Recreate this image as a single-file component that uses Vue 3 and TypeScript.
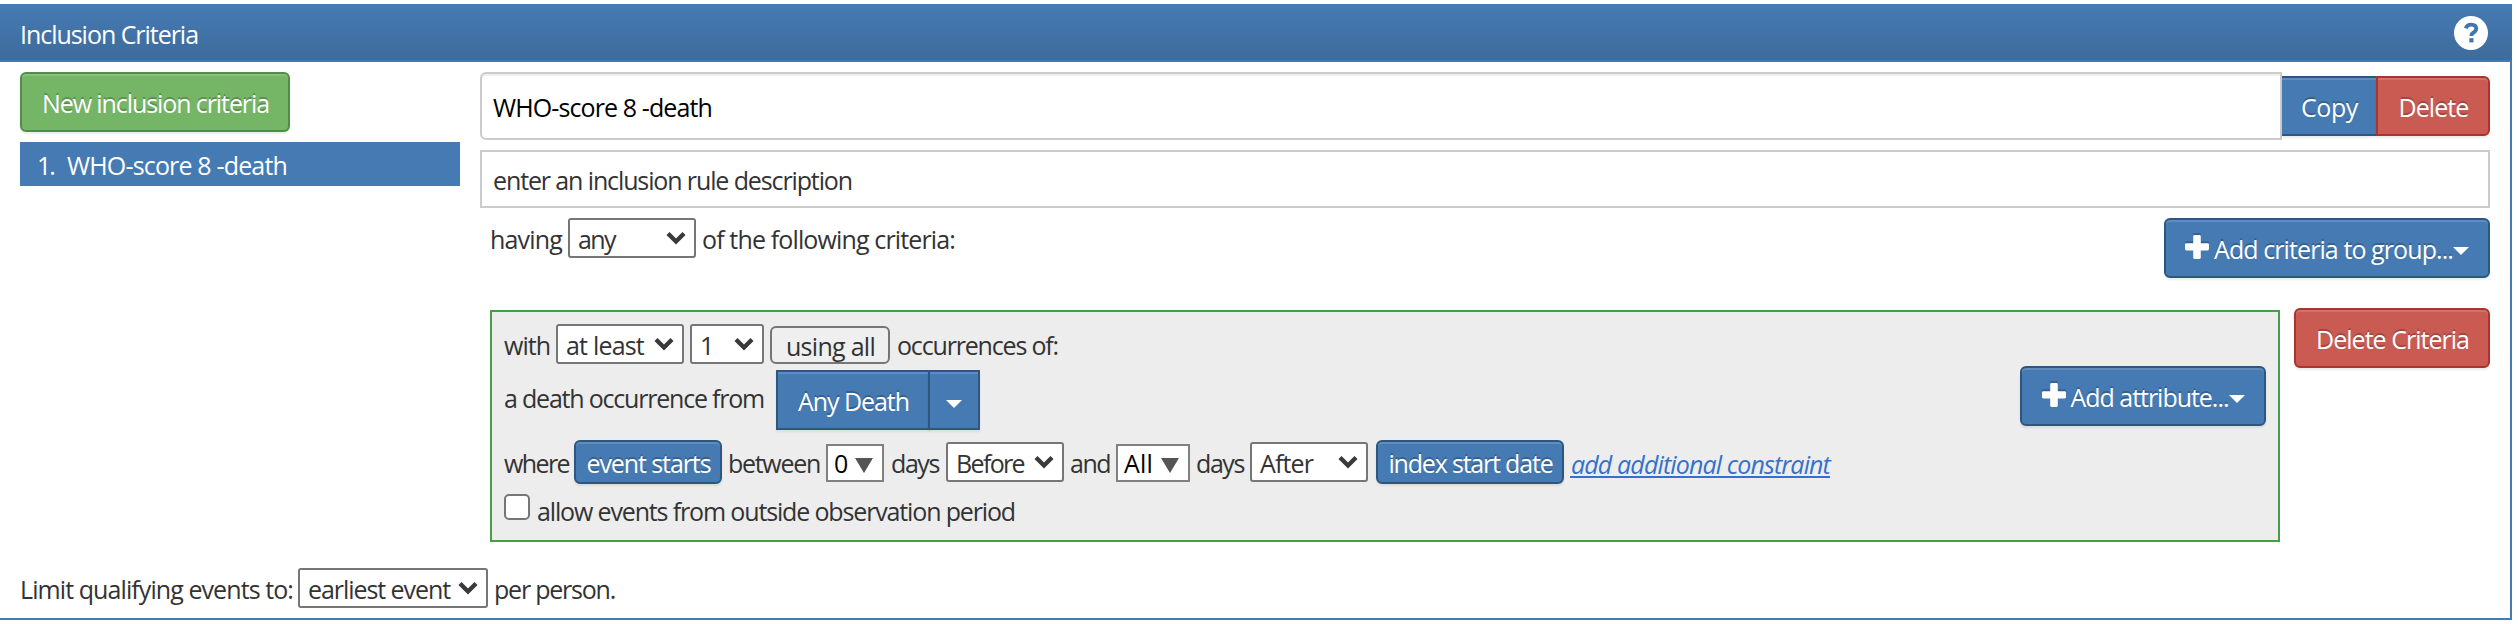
<script setup lang="ts">
import { h, type Directive, type FunctionalComponent } from 'vue'

// Spreads or tightens letters so a label occupies exactly the given width.
const vFit: Directive<HTMLElement, number> = {
  mounted(el, { value }) {
    const natural = el.getBoundingClientRect().width
    const count = (el.textContent ?? '').length
    el.style.letterSpacing = `${(value - natural) / count}px`
    el.style.width = `${value}px`
  },
}

const Chevron: FunctionalComponent = () =>
  h('svg', { width: 20, height: 14, viewBox: '0 0 20 14' }, [
    h('path', { d: 'M2 2.5 10 10.5 18 2.5', fill: 'none', stroke: '#3a3a3a', 'stroke-width': 4.4 }),
  ])
const Plus: FunctionalComponent = () =>
  h('svg', { width: 24, height: 24, viewBox: '0 0 24 24' }, [
    h('path', {
      d: 'M9.6 0h4.8q1.4 0 1.4 1.4v6.8h6.8q1.4 0 1.4 1.4v4.4q0 1.4-1.4 1.4h-6.8v7.2q0 1.4-1.4 1.4H9.6q-1.4 0-1.4-1.4v-7.2H1.4Q0 15.4 0 14V9.6q0-1.4 1.4-1.4h6.8V1.4Q8.2 0 9.6 0z',
      fill: '#fff',
    }),
  ])
const Caret: FunctionalComponent = () =>
  h('svg', { width: 16, height: 8, viewBox: '0 0 16 8' }, [h('path', { d: 'M0 0h16L8 8z', fill: '#fff' })])
const Arrow: FunctionalComponent = () =>
  h('svg', { width: 18, height: 15, viewBox: '0 0 18 15' }, [h('path', { d: 'M0 0h18L9 15z', fill: '#555' })])
</script>

<template>
  <div class="panel">
    <header class="head">
      <span v-fit="179" class="t">Inclusion Criteria</span>
      <svg class="help" width="34" height="34" viewBox="0 0 34 34">
        <circle cx="17" cy="17" r="17" fill="#fff" />
        <path d="M11.8 12.3Q13 8.6 17.2 8.6q5 .1 5 4 0 2.4-2.6 3.9-2.2 1.2-2.2 3.4" fill="none" stroke="#4277ae" stroke-width="3.8" />
        <rect x="15.3" y="22.2" width="4.2" height="4.2" fill="#4277ae" />
      </svg>
    </header>

    <div class="body">
      <aside class="side">
        <button class="btn green new"><span v-fit="228" class="t">New inclusion criteria</span></button>
        <div class="item">
          <span v-fit="18" class="t">1.</span>
          <span v-fit="221" class="t title">WHO-score 8 -death</span>
        </div>
      </aside>

      <main class="main">
        <div class="name-row">
          <div class="input name"><span v-fit="220" class="t">WHO-score 8 -death</span></div>
          <button class="btn blue copy"><span v-fit="58" class="t">Copy</span></button>
          <button class="btn red delete"><span v-fit="71" class="t">Delete</span></button>
        </div>
        <div class="input desc"><span v-fit="360" class="t">enter an inclusion rule description</span></div>

        <div class="having-row">
          <div class="line having">
            <span v-fit="73" class="t">having</span>
            <div class="select s128 g6"><span v-fit="38" class="t">any</span><Chevron /></div>
            <span v-fit="254" class="t g5">of the following criteria:</span>
          </div>
          <button class="btn blue add-criteria">
            <Plus /><span v-fit="240" class="t">Add criteria to group...</span><Caret class="caret" />
          </button>
        </div>

        <div class="group-row">
          <section class="group">
            <div class="line r1">
              <span v-fit="47" class="t">with</span>
              <div class="select s128 g6"><span v-fit="79" class="t">at least</span><Chevron /></div>
              <div class="select s74 g6"><span class="t one">1</span><Chevron /></div>
              <button class="plain g6"><span v-fit="90" class="t">using all</span></button>
              <span v-fit="162" class="t g6">occurrences of:</span>
            </div>

            <div class="r2">
              <span v-fit="261" class="t source">a death occurrence from</span>
              <div class="split">
                <button class="btn blue square any"><span v-fit="112" class="t">Any Death</span></button>
                <button class="btn blue square drop"><Caret /></button>
              </div>
              <button class="btn blue add-attribute">
                <Plus /><span v-fit="159" class="t">Add attribute...</span><Caret class="caret" />
              </button>
            </div>

            <div class="line r3">
              <span v-fit="66" class="t">where</span>
              <button class="btn blue small w148 g5"><span v-fit="125" class="t">event starts</span></button>
              <span v-fit="93" class="t g5">between</span>
              <div class="combo w58 g6"><span class="t">0</span><Arrow /></div>
              <span v-fit="49" class="t g6">days</span>
              <div class="select s118 g7"><span v-fit="69" class="t">Before</span><Chevron /></div>
              <span v-fit="41" class="t g5">and</span>
              <div class="combo w74 g6"><span v-fit="30" class="t">All</span><Arrow /></div>
              <span v-fit="49" class="t g5">days</span>
              <div class="select s118 g6"><span v-fit="54" class="t">After</span><Chevron /></div>
              <button class="btn blue small w188 g8"><span v-fit="165" class="t">index start date</span></button>
              <a class="link g6"><span v-fit="260" class="t">add additional constraint</span></a>
            </div>

            <label class="r4">
              <span class="check"></span>
              <span v-fit="479" class="t">allow events from outside observation period</span>
            </label>
          </section>
          <button class="btn red delete-criteria"><span v-fit="154" class="t">Delete Criteria</span></button>
        </div>
      </main>
    </div>

    <footer class="line foot">
      <span v-fit="274" class="t">Limit qualifying events to:</span>
      <div class="select s190 g5"><span v-fit="143" class="t">earliest event</span><Chevron /></div>
      <span v-fit="122" class="t g5">per person.</span>
    </footer>
  </div>
</template>

<style>
body {
  background: #fff;
}
</style>

<style scoped>
* {
  box-sizing: border-box;
}
.panel {
  width: 2512px;
  height: 616px;
  margin-top: 4px;
  border-right: 2px solid #457ab3;
  border-bottom: 2px solid #457ab3;
  background: #fff;
  box-shadow: 0 4px 0 #fafafa;
  font-family: 'Open Sans', 'Noto Sans', sans-serif;
  font-size: 25px;
  color: #333;
}
.t {
  display: inline-block;
  flex: none;
  padding: 2px 0 0 1px;
  line-height: 30px;
  white-space: pre;
}
svg {
  flex: none;
  display: block;
}
.head {
  display: flex;
  align-items: center;
  justify-content: space-between;
  width: 2512px;
  height: 58px;
  padding: 0 24px 0 19px;
  border-top: 2px solid #457ab3;
  border-bottom: 2px solid #457ab3;
  background: linear-gradient(#457ab3, #3e6b9b);
  color: #fff;
}
.body {
  display: flex;
  gap: 20px;
  padding: 10px 20px 0;
}
.side {
  width: 440px;
}
.btn {
  display: flex;
  align-items: center;
  justify-content: center;
  flex: none;
  height: 60px;
  padding: 0;
  border: 2px solid;
  border-radius: 6px;
  font: inherit;
  color: #fff;
  text-shadow: 0 -2px 0 rgba(0, 0, 0, 0.22);
  box-shadow: inset 0 2px 0 rgba(255, 255, 255, 0.15), 0 2px 2px rgba(0, 0, 0, 0.075);
}
.green {
  background: #74b566;
  border-color: #528d47;
}
.blue {
  background: #457ab3;
  border-color: #2d5681;
}
.red {
  background: #c95b53;
  border-color: #ac342f;
}
.new {
  width: 270px;
}
.item {
  display: flex;
  align-items: center;
  height: 44px;
  margin-top: 10px;
  padding-left: 16px;
  background: #457ab3;
  color: #fff;
}
.title {
  margin-left: 12px;
}
.main {
  width: 2010px;
}
.name-row {
  display: flex;
  align-items: center;
  height: 68px;
}
.input {
  display: flex;
  align-items: center;
  padding-left: 10px;
  border: 2px solid #ccc;
  background: #fff;
}
.name {
  width: 1802px;
  height: 68px;
  border-radius: 6px 0 0 6px;
  box-shadow: inset 0 2px 0 #eee;
  color: #000;
}
.copy {
  width: 94px;
  border-radius: 0;
  border-left: 0;
  border-right: 0;
}
.delete {
  width: 114px;
  border-radius: 0 6px 6px 0;
}
.desc {
  height: 58px;
  margin-top: 10px;
}
.having-row {
  display: flex;
  justify-content: space-between;
  height: 60px;
  margin-top: 10px;
}
.line {
  display: flex;
  align-items: center;
  height: 40px;
}
.having {
  padding-left: 9px;
}
.g5 {
  margin-left: 5px;
}
.g6 {
  margin-left: 6px;
}
.g7 {
  margin-left: 7px;
}
.g8 {
  margin-left: 8px;
}
.select {
  display: flex;
  align-items: center;
  justify-content: space-between;
  flex: none;
  height: 40px;
  padding: 0 8px 0 7px;
  border: 2px solid #767676;
  border-radius: 3px;
  background: #fff;
}
.s128 {
  width: 128px;
}
.s74 {
  width: 74px;
}
.s118 {
  width: 118px;
}
.s190 {
  width: 190px;
}
.add-criteria {
  width: 326px;
}
.add-criteria svg:first-child,
.add-attribute svg:first-child {
  margin: 0 4px 3px 0;
  filter: drop-shadow(0 -2px 0 rgba(0, 0, 0, 0.2));
}
.caret {
  margin-top: 5px;
}
.group-row {
  display: flex;
  justify-content: space-between;
  margin-top: 30px;
  padding-left: 10px;
}
.group {
  width: 1790px;
  height: 232px;
  margin-top: 2px;
  padding: 12px 12px 0 11px;
  border: 2px solid #45a045;
  background: #ededed;
}
.delete-criteria {
  width: 196px;
}
.plain {
  display: flex;
  align-items: center;
  justify-content: center;
  width: 120px;
  height: 38px;
  margin-top: 2px;
  padding: 0;
  border: 2px solid #767676;
  border-radius: 6px;
  background: #efefef;
  font: inherit;
  color: #333;
}
.r2 {
  display: flex;
  height: 60px;
  margin-top: 6px;
}
.source {
  margin-top: 11px;
}
.split {
  display: flex;
  margin-left: 12px;
}
.square {
  border-radius: 0;
}
.any {
  width: 154px;
}
.drop {
  width: 52px;
  margin-left: -2px;
  padding-top: 8px;
}
.add-attribute {
  width: 246px;
  margin: -4px 0 0 auto;
}
.r3 {
  margin-top: 12px;
}
.small {
  height: 44px;
}
.w148 {
  width: 148px;
}
.w188 {
  width: 188px;
}
.combo {
  display: flex;
  align-items: center;
  justify-content: space-between;
  flex: none;
  height: 38px;
  margin-top: 2px;
  padding: 0 9px 0 5px;
  border: 2px solid #808080;
  background: #fff;
  color: #000;
}
.combo .t {
  padding-top: 0;
}
.combo svg {
  margin-top: 4px;
}
.w58 {
  width: 58px;
}
.w74 {
  width: 74px;
}
.link {
  height: 30px;
  color: #3571cc;
  font-style: italic;
}
.link .t {
  height: 29px;
  padding-top: 0;
  border-bottom: 2px solid #2f72d4;
}
.r4 {
  display: flex;
  margin-top: 12px;
}
.check {
  width: 26px;
  height: 26px;
  margin: 0 6px 0 1px;
  border: 2px solid #767676;
  border-radius: 5px;
  background: #fff;
}
.foot {
  margin-top: 26px;
  padding-left: 19px;
}
</style>
